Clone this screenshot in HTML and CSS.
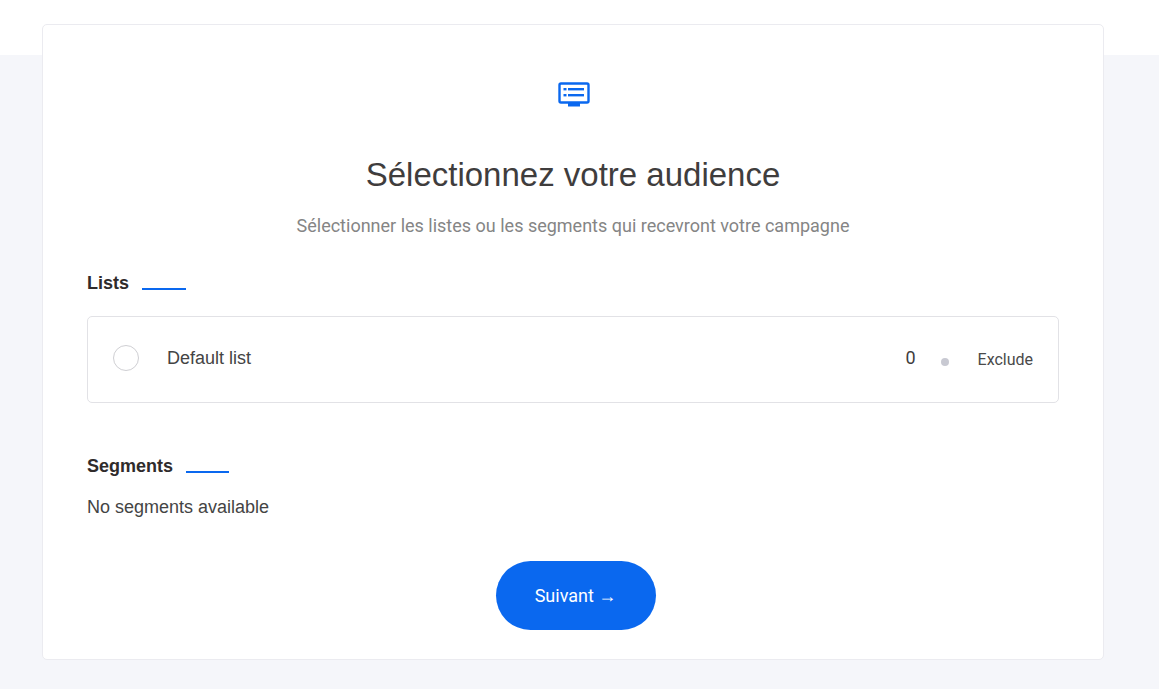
FILE: index.html
```html
<!DOCTYPE html>
<html lang="fr">
<head>
<meta charset="utf-8">
<title>Sélectionnez votre audience</title>
<link rel="stylesheet" href="styles.css">
</head>
<body>
<div class="topbar"></div>
<main class="card">
  <div class="hero-icon">
    <svg width="32" height="26" viewBox="0 0 32 26" fill="none">
      <rect x="1.5" y="1.5" width="29" height="19" rx="1.5" stroke="#0a68ef" stroke-width="2.4"/>
      <rect x="5.5" y="6" width="3" height="2.4" fill="#0a68ef"/>
      <rect x="10" y="6" width="16" height="2.4" fill="#0a68ef"/>
      <rect x="5.5" y="12" width="3" height="2.4" fill="#0a68ef"/>
      <rect x="10" y="12" width="16" height="2.4" fill="#0a68ef"/>
      <rect x="10" y="21" width="12" height="3.5" fill="#0a68ef"/>
    </svg>
  </div>
  <h1 class="title">Sélectionnez votre audience</h1>
  <p class="subtitle">Sélectionner les listes ou les segments qui recevront votre campagne</p>

  <h2 class="section-head section-lists">Lists<span class="rule rule-lists"></span></h2>
  <div class="list-row">
    <span class="radio"></span>
    <span class="list-name">Default list</span>
    <span class="count">0</span>
    <span class="dot"></span>
    <span class="exclude">Exclude</span>
  </div>

  <h2 class="section-head section-segments">Segments<span class="rule rule-segments"></span></h2>
  <p class="empty">No segments available</p>

  <div class="actions"><button class="next" type="button">Suivant →</button></div>
</main>
</body>
</html>
```
FILE: styles.css
```css
* { box-sizing: border-box; }
html, body { margin: 0; height: 100%; }
body {
  background: #f5f6fa;
  font-family: "Liberation Sans", Arial, sans-serif;
  color: #3f3d3d;
  overflow: hidden;
}
.topbar { height: 55px; background: #fff; }
.card {
  width: 1062px;
  height: 636px;
  margin: -31px 0 0 42px;
  padding: 0 44px;
  background: #fff;
  border: 1px solid #ebebf0;
  border-radius: 5px;
  position: relative;
}
.hero-icon { display: flex; justify-content: center; padding-top: 57px; height: 83px; margin-left: 1px; }
.hero-icon svg { display: block; }
.title {
  margin: 47px 0 0;
  font-size: 33px;
  line-height: 40px;
  font-weight: 400;
  text-align: center;
  color: #3f3d3d;
}
.subtitle {
  margin: 19px 0 0;
  font-family: Roboto, sans-serif;
  font-size: 18px;
  line-height: 24px;
  text-align: center;
  color: #858585;
}
.section-head {
  display: flex;
  align-items: center;
  margin: 0;
  font-size: 18px;
  line-height: 24px;
  font-weight: 700;
  color: #2f2b2b;
}
.section-lists { margin-top: 33px; }
.section-segments { margin-top: 51px; }
.rule { display: block; height: 2px; background: #0a68ef; margin-top: 11px; }
.rule-lists { width: 44px; margin-left: 13px; }
.rule-segments { width: 43px; margin-left: 13px; }
.list-row {
  display: flex;
  align-items: center;
  height: 87px;
  margin-top: 21px;
  padding: 0 25px;
  border: 1px solid #e2e2e6;
  border-radius: 5px;
}
.radio {
  width: 26px;
  height: 26px;
  margin-top: -3px;
  border: 1px solid #cfcfd3;
  border-radius: 50%;
}
.list-name { margin: -3px 0 0 28px; font-size: 18px; line-height: 24px; color: #444; }
.count { margin: -3px 0 0 auto; font-family: Roboto, sans-serif; font-size: 18px; line-height: 24px; color: #3f3d3d; }
.dot { width: 8px; height: 8px; margin: 4px 0 0 25px; border-radius: 50%; background: #c8c9d2; }
.exclude { margin: 1px 0 0 29px; font-family: Roboto, sans-serif; font-size: 16px; line-height: 20px; color: #4a4a4a; }
.empty { margin: 17px 0 0; font-size: 18px; line-height: 24px; color: #444; }
.actions { display: flex; justify-content: center; margin-top: 42px; padding-left: 5px; }
.next {
  width: 160px;
  height: 69px;
  border: 0;
  border-radius: 35px;
  background: #0a68ef;
  color: #fff;
  font-family: Roboto, sans-serif;
  font-size: 18px;
}
```
